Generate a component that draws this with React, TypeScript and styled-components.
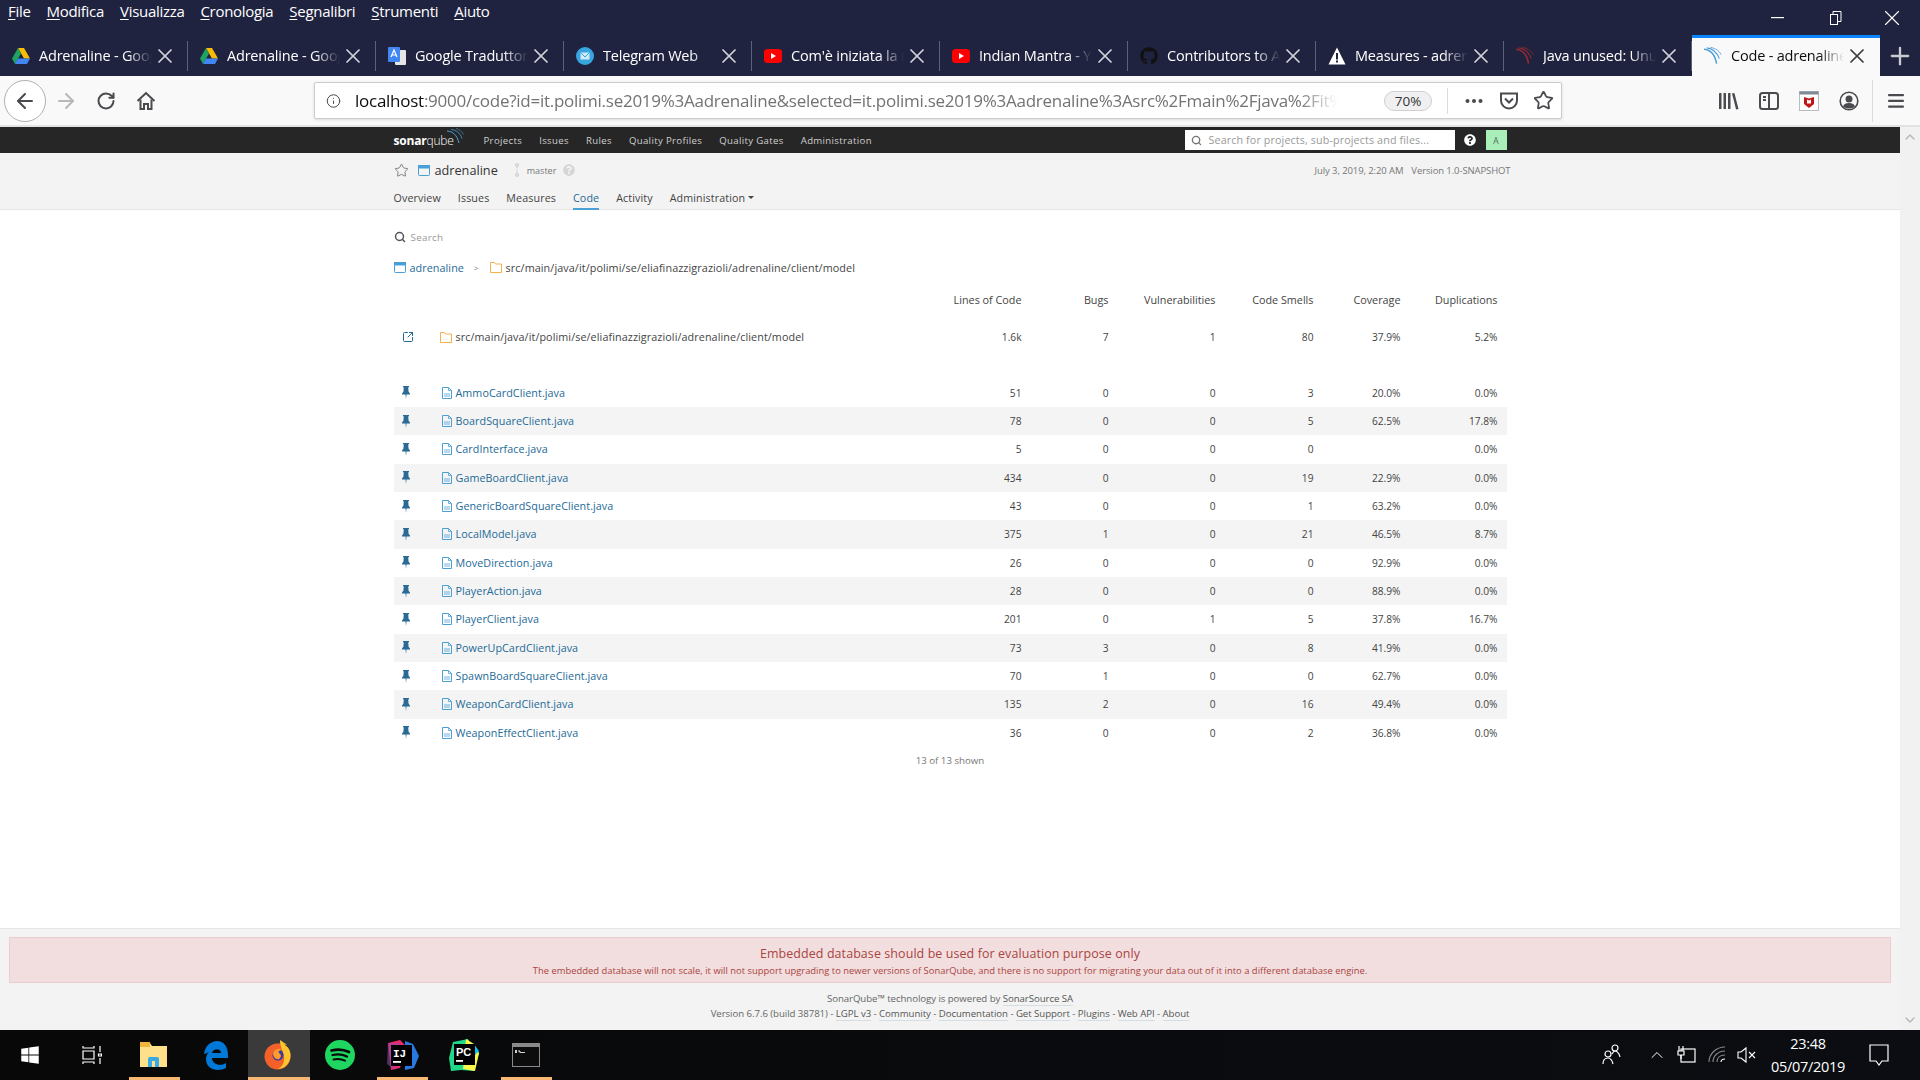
import React from 'react';
import styled, { createGlobalStyle } from 'styled-components';
import { ArrowLeft, ArrowRight, RotateCw, X, Plus, Info, Star, Search, ChevronUp, ChevronDown, SquareArrowOutUpRight } from 'lucide-react';
import { FaGithub, FaQuestionCircle, FaWindows } from 'react-icons/fa';

const UI_FONT = '"Open Sans", "Noto Sans", "Liberation Sans", sans-serif';

const GlobalStyle = createGlobalStyle`
  html, body {
    margin: 0;
    padding: 0;
    background: #20233f;
    overflow: hidden;
  }
  * {
    box-sizing: border-box;
  }
`;

const Screen = styled.div`
  width: 1920px;
  height: 1080px;
  display: flex;
  flex-direction: column;
  font-family: ${UI_FONT};
  overflow: hidden;
`;

/* ---------- browser chrome ---------- */

const TitleBar = styled.div`
  height: 76px;
  background: #20233f;
  display: flex;
  flex-direction: column;
  flex: none;
`;

const MenuRow = styled.div`
  height: 35px;
  display: flex;
  justify-content: space-between;
`;

const MenuList = styled.div`
  display: flex;
  padding: 1px 0 0 8px;
  height: 24px;
  gap: 16px;
`;

const MenuItem = styled.span`
  color: #fff;
  font-size: 15px;
  line-height: 20px;
  letter-spacing: -0.3px;
  u {
    text-underline-offset: 2px;
  }
`;

const WindowControls = styled.div`
  display: flex;
`;

const WindowButton = styled.div`
  width: 56px;
  height: 35px;
  display: flex;
  align-items: center;
  justify-content: center;
  color: #fff;
`;

const MinimizeButton = styled(WindowButton)`
  padding-right: 5px;
`;

const TabRow = styled.div`
  height: 41px;
  display: flex;
`;

const Tab = styled.div<{ $active?: boolean }>`
  width: 188px;
  height: 41px;
  flex: none;
  position: relative;
  display: flex;
  align-items: center;
  padding: ${({ $active }) => ($active ? '0 0 3px 12px' : '0 0 0 12px')};
  background: ${({ $active }) => ($active ? '#f9f9fa' : 'transparent')};
  border-top: ${({ $active }) => ($active ? '3px solid #0a84ff' : 'none')};
  color: ${({ $active }) => ($active ? '#0c0c0d' : '#fff')};

  &::after {
    content: '';
    display: ${({ $active }) => ($active ? 'none' : 'block')};
    position: absolute;
    right: 0;
    top: 6px;
    bottom: 5px;
    width: 1px;
    background: rgba(255, 255, 255, 0.28);
  }
`;

const TabIcon = styled.div`
  width: 18px;
  height: 18px;
  flex: none;
  display: flex;
  align-items: center;
  justify-content: center;
`;

const TabTitle = styled.div`
  width: 113px;
  margin-left: 9px;
  flex: none;
  font-size: 14.5px;
  letter-spacing: -0.2px;
  white-space: nowrap;
  overflow: hidden;
  mask-image: linear-gradient(90deg, #000 78%, transparent 100%);
`;

const TabClose = styled.div`
  width: 24px;
  margin-left: 1px;
  flex: none;
  display: flex;
  justify-content: center;
  opacity: 0.8;
`;

const NewTab = styled.div`
  width: 40px;
  display: flex;
  align-items: center;
  justify-content: center;
  color: #c9c9d2;
`;

const Toolbar = styled.div`
  height: 51px;
  flex: none;
  background: #f9f9fa;
  border-bottom: 2px solid #e3e3e5;
  display: flex;
  align-items: center;
  padding: 0 4px;
  color: #4a4a4f;
`;

const BackButton = styled.div`
  width: 42px;
  height: 42px;
  border-radius: 50%;
  border: 1px solid #b1b1b3;
  background: #fff;
  display: flex;
  align-items: center;
  justify-content: center;
  flex: none;
`;

const ToolSlot = styled.div<{ $w?: number; $dim?: boolean }>`
  width: ${({ $w }) => $w ?? 40}px;
  height: 36px;
  flex: none;
  display: flex;
  align-items: center;
  justify-content: center;
  color: ${({ $dim }) => ($dim ? '#b8b8ba' : '#4a4a4f')};
`;

const UrlBar = styled.div`
  width: 1248px;
  height: 37px;
  margin-left: 148px;
  flex: none;
  background: #fff;
  border: 1px solid #ccc;
  border-radius: 2px;
  box-shadow: 0 1px 3px rgba(0, 0, 0, 0.12);
  display: flex;
  align-items: center;
  padding-left: 11px;
`;

const UrlText = styled.div`
  width: 983px;
  margin-left: 14px;
  flex: none;
  font-size: 17px;
  letter-spacing: -0.26px;
  color: #737373;
  white-space: nowrap;
  overflow: hidden;
  mask-image: linear-gradient(90deg, #000 96%, transparent 100%);

  b {
    font-weight: 400;
    color: #0c0c0d;
  }
`;

const ZoomPill = styled.div`
  width: 48px;
  height: 20px;
  margin-left: 46px;
  flex: none;
  border: 1px solid #d0d0d2;
  border-radius: 10px;
  background: #f0f0f2;
  font-size: 13.5px;
  line-height: 18px;
  text-align: center;
  color: #333;
`;

const UrlSeparator = styled.div`
  width: 1px;
  height: 26px;
  margin: 0 8px 0 15px;
  background: #dcdcde;
  flex: none;
`;

const ToolSpacer = styled.div`
  flex: 1;
`;

const ToolSeparator = styled.div`
  width: 1px;
  height: 42px;
  margin: 0 3px;
  background: #dcdcde;
  flex: none;
`;

/* ---------- page ---------- */

const PageRow = styled.div`
  flex: 1;
  display: flex;
  min-height: 0;
`;

const Page = styled.div`
  width: 1900px;
  flex: none;
  display: flex;
  flex-direction: column;
  background: #fff;
`;

const ScrollTrack = styled.div`
  width: 20px;
  flex: none;
  background: #f1f1f1;
  color: #b5b5b5;
  display: flex;
  flex-direction: column;
  align-items: center;
  justify-content: space-between;
  padding: 2px 0;
`;

const Container = styled.div`
  width: 1113px;
  margin: 0 auto;
`;

const NavBar = styled.div`
  height: 26px;
  background: #262626;
  flex: none;
`;

const NavInner = styled(Container)`
  height: 26px;
  display: flex;
  align-items: center;
`;

const Logo = styled.div`
  width: 90px;
  height: 26px;
  flex: none;
  display: flex;
  align-items: center;
  color: #fff;
  font-size: 12px;
  letter-spacing: -0.2px;

  b {
    font-weight: 700;
  }
  span {
    font-weight: 300;
  }
  svg {
    margin: -9px 0 0 -7px;
  }
`;

const NavLinks = styled.div`
  display: flex;
  gap: 17px;
`;

const NavLink = styled.span`
  color: #d0d0d0;
  font-size: 9.6px;
  letter-spacing: 0.35px;
`;

const NavRight = styled.div`
  margin-left: auto;
  display: flex;
  align-items: center;
`;

const GlobalSearch = styled.div`
  width: 270px;
  height: 20px;
  background: #fff;
  display: flex;
  align-items: center;
  padding-left: 6px;
  gap: 7px;
  color: #777;
  font-size: 10.7px;
  letter-spacing: 0.14px;
  white-space: nowrap;

  span {
    color: #999;
  }
`;

const HelpSlot = styled.div`
  width: 31px;
  display: flex;
  justify-content: center;
  color: #fff;
`;

const Avatar = styled.div`
  width: 21px;
  height: 20px;
  background: #a9efb9;
  color: #4d6b55;
  font-size: 8.5px;
  display: flex;
  align-items: center;
  justify-content: center;
`;

const ComponentHeader = styled.div`
  height: 57px;
  flex: none;
  background: #f3f3f3;
  border-bottom: 1px solid #e6e6e6;
`;

const HeaderTop = styled.div`
  height: 35px;
  display: flex;
  align-items: center;
  padding-bottom: 1px;
`;

const ProjectName = styled.span`
  font-size: 12.7px;
  color: #333;
  margin: 0 16px 0 5px;
`;

const BranchName = styled.span`
  font-size: 9px;
  color: #777;
  margin: 1px 7px 0 7px;
`;

const HeaderMeta = styled.div`
  margin-left: auto;
  margin-right: -4px;
  display: flex;
  gap: 8px;
  font-size: 9.5px;
  letter-spacing: -0.1px;
  color: #777;
`;

const StarSlot = styled.div`
  width: 24px;
  display: flex;
  color: #777;
`;

const HeaderTabs = styled.div`
  height: 22px;
  display: flex;
  gap: 17px;
`;

const HeaderTab = styled.div<{ $active?: boolean }>`
  font-size: 10.7px;
  letter-spacing: 0.12px;
  color: ${({ $active }) => ($active ? '#236a97' : '#444')};
  height: 22px;
  line-height: 20px;
  display: flex;
  align-items: flex-start;
  border-bottom: 2px solid ${({ $active }) => ($active ? '#4b9fd5' : 'transparent')};
`;

const Caret = styled.span`
  width: 0;
  height: 0;
  border-left: 3.5px solid transparent;
  border-right: 3.5px solid transparent;
  border-top: 3.5px solid #444;
  margin: 8px 0 0 3px;
`;

const Main = styled(Container)`
  flex: 1;
  padding-top: 16px;
`;

const SearchRow = styled.div`
  height: 22px;
  display: flex;
  align-items: center;
  gap: 5px;
  color: #555;
  font-size: 9.8px;

  span {
    color: #999;
    letter-spacing: 0.3px;
  }
`;

const Breadcrumbs = styled.div`
  height: 20px;
  margin-top: 9px;
  display: flex;
  align-items: center;
  font-size: 10.8px;
  letter-spacing: 0.06px;
  color: #444;
`;

const CrumbLink = styled.span`
  color: #236a97;
  margin: 0 10px 0 4px;
`;

const CrumbArrow = styled.span`
  color: #777;
  font-size: 8px;
  margin-right: 11px;
`;

const CrumbPath = styled.span`
  margin-left: 4px;
  letter-spacing: 0.09px;
`;

const GRID = '46px 502px 80px 87px 107px 98px 87px 97px';

const HeadRow = styled.div`
  height: 20px;
  margin-top: 12px;
  display: grid;
  grid-template-columns: ${GRID};
  align-items: center;
  padding-right: 9px;
  font-size: 10.8px;
  color: #444;
`;

const BaseRow = styled.div`
  height: 28px;
  margin-top: 14px;
  margin-bottom: 27.67px;
  display: grid;
  grid-template-columns: ${GRID};
  align-items: center;
  padding-right: 9px;
  font-size: 10.2px;
  color: #444;
`;

const FileRow = styled.div<{ $striped: boolean }>`
  height: 28.33px;
  display: grid;
  grid-template-columns: ${GRID};
  align-items: center;
  padding-right: 9px;
  font-size: 10.2px;
  color: #444;
  background: ${({ $striped }) => ($striped ? '#f4f4f4' : 'transparent')};
`;

const PinCell = styled.div`
  padding-left: 8px;
  display: flex;
  color: #2a6a94;
`;

const LinkCell = styled.div`
  padding-left: 8px;
  display: flex;
  color: #236a97;
`;

const NameCell = styled.div<{ $link?: boolean }>`
  display: flex;
  align-items: center;
  gap: 4px;
  font-size: 10.75px;
  letter-spacing: ${({ $link }) => ($link ? 0.06 : 0.1)}px;
  padding-left: ${({ $link }) => ($link ? 2 : 0)}px;
  color: ${({ $link }) => ($link ? '#236a97' : '#444')};
`;

const NumCell = styled.div`
  text-align: right;
`;

const Shown = styled.div`
  height: 16px;
  margin-top: 6px;
  text-align: center;
  font-size: 9.7px;
  line-height: 16px;
  color: #777;
`;

const Footer = styled.div`
  height: 102px;
  flex: none;
  background: #f3f3f3;
  border-top: 1px solid #e6e6e6;
  padding: 8px 9px 0;
  text-align: center;
`;

const Alert = styled.div`
  height: 46px;
  background: #f2dede;
  border: 1px solid #ebccd1;
  color: #a94442;
  padding-top: 7px;
`;

const AlertTitle = styled.div`
  font-size: 12.45px;
  line-height: 18px;
  letter-spacing: 0.1px;
`;

const AlertText = styled.div`
  font-size: 9.4px;
  line-height: 15px;
  letter-spacing: 0.02px;
`;

const FooterLines = styled.div`
  margin-top: 8px;
`;

const FooterLine = styled.div`
  font-size: 9.65px;
  line-height: 15px;
  color: #666;
  letter-spacing: -0.05px;
`;

const FooterLink = styled.span`
  color: #555;
  border-bottom: 1px solid #d4dde3;
`;

/* ---------- taskbar ---------- */

const Taskbar = styled.div`
  height: 50px;
  flex: none;
  background: linear-gradient(90deg, #080808, #0b0d12);
  display: flex;
  color: #fff;
`;

const TaskTile = styled.div<{ $active?: boolean; $open?: boolean; $wide?: boolean }>`
  width: 62px;
  height: 50px;
  flex: none;
  position: relative;
  display: flex;
  align-items: center;
  justify-content: center;
  padding-right: 3px;
  background: ${({ $active }) => ($active ? '#3a3a3a' : 'transparent')};

  &::after {
    content: '';
    display: ${({ $open }) => ($open ? 'block' : 'none')};
    position: absolute;
    left: ${({ $wide }) => ($wide ? 0 : 5)}px;
    right: ${({ $wide }) => ($wide ? 0 : 6)}px;
    bottom: 0;
    height: 3px;
    background: #f6b873;
  }
`;

const Tray = styled.div`
  margin-left: auto;
  margin-right: 10px;
  display: flex;
  align-items: center;
`;

const TraySlot = styled.div<{ $w: number; $gap?: number }>`
  width: ${({ $w }) => $w}px;
  margin-left: ${({ $gap }) => $gap ?? 0}px;
  height: 50px;
  display: flex;
  align-items: center;
  justify-content: center;
`;

const Clock = styled.div`
  width: 80px;
  margin-left: 6px;
  text-align: center;
  font-size: 14.5px;
  line-height: 23px;
  color: #fff;
  letter-spacing: -0.3px;
`;

/* ---------- drawings ---------- */

const DriveIcon = () => (
  <svg width="18" height="16" viewBox="0 0 18 16">
    <path d="M6 0h6l6 10.5h-6z" fill="#fbbc04" />
    <path d="M6 0 0 10.5 3 16l6-10.5z" fill="#1ea362" />
    <path d="M3 16h12l3-5.5H6z" fill="#4285f4" />
  </svg>
);

const TranslateIcon = () => (
  <svg width="18" height="20" viewBox="0 0 18 20">
    <rect x="7" y="4" width="11" height="15" rx="1" fill="#e6e6e6" />
    <rect x="0" y="1" width="12" height="15" rx="1" fill="#4285f4" />
    <path d="M3 11l3-7 3 7M4 9h4" stroke="#fff" strokeWidth="1.2" fill="none" />
  </svg>
);

const TelegramIcon = () => (
  <svg width="18" height="18" viewBox="0 0 18 18">
    <circle cx="9" cy="9" r="9" fill="#37a6e0" />
    <rect x="4.5" y="5.5" width="9" height="7" fill="#cfe9f7" />
    <path d="M4.5 5.5 9 10l4.5-4.5" stroke="#37a6e0" fill="none" />
  </svg>
);

const YoutubeIcon = () => (
  <svg width="18" height="18" viewBox="0 0 18 18">
    <rect x="0" y="2" width="18" height="14" rx="3.5" fill="#f00" />
    <path d="M7 6l5 3-5 3z" fill="#fff" />
  </svg>
);

const WarningIcon = () => (
  <svg width="18" height="18" viewBox="0 0 18 18">
    <path d="M9 0.5 17.5 17.5H.5z" fill="#fff" />
    <rect x="8" y="6" width="2" height="6.5" fill="#20233f" />
    <rect x="8" y="13.5" width="2" height="2" fill="#20233f" />
  </svg>
);

const WaveIcon = ({ color }: { color: string }) => (
  <svg width="20" height="19" viewBox="0 0 20 19" fill="none" stroke={color}>
    <path d="M0 2.500c7 .5 12 5 14 16" strokeWidth="1.700" />
    <path d="M3 1c6 .5 11 4 14 12" strokeWidth="1.200" />
    <path d="M7 .5c5 .8 9.500 3 12 8" strokeWidth=".9" />
  </svg>
);

const HomeIcon = () => (
  <svg width="20" height="20" viewBox="0 0 20 20" fill="none" stroke="#4a4a4f" strokeWidth="2">
    <path d="M1.500 10 10 2l8.500 8" />
    <path d="M4.500 8.500V18h3.500v-5h4v5h3.500V8.500" />
  </svg>
);

const DotsIcon = () => (
  <svg width="18" height="4" viewBox="0 0 18 4" fill="#4a4a4f">
    <circle cx="2.500" cy="2" r="2" />
    <circle cx="9" cy="2" r="2" />
    <circle cx="15.500" cy="2" r="2" />
  </svg>
);

const PocketIcon = () => (
  <svg width="20" height="18" viewBox="0 0 20 18" fill="none" stroke="#4a4a4f" strokeWidth="2">
    <path d="M2 1.500h16v7a8 8 0 0 1-16 0z" />
    <path d="M6 6.500l4 4 4-4" />
  </svg>
);

const LibraryIcon = () => (
  <svg width="20" height="18" viewBox="0 0 20 18" fill="#4a4a4f">
    <rect x="0" y="1" width="2.500" height="16" rx=".5" />
    <rect x="4.500" y="1" width="2.500" height="16" rx=".5" />
    <rect x="9" y="1" width="2.500" height="16" rx=".5" />
    <path d="M13 1.500l2.400-.6L19.500 17l-2.400.5z" />
  </svg>
);

const SidebarIcon = () => (
  <svg width="20" height="18" viewBox="0 0 20 18" fill="none" stroke="#4a4a4f" strokeWidth="2">
    <rect x="1" y="1" width="18" height="16" rx="2.500" />
    <path d="M10 1v16M4 5h3M4 8h3" />
  </svg>
);

const McAfeeIcon = () => (
  <svg width="20" height="20" viewBox="0 0 20 20">
    <rect x=".5" y=".5" width="19" height="19" fill="#fff" stroke="#b8bcc0" />
    <rect x=".5" y=".5" width="19" height="3" fill="#7f8a94" />
    <path d="M5 6l5 1.500L15 6v7l-5 4-5-4z" fill="#c01818" />
    <path d="M8 8.500l2 1 2-1v4h-4z" fill="#fff" />
  </svg>
);

const AccountIcon = () => (
  <svg width="20" height="20" viewBox="0 0 20 20">
    <circle cx="10" cy="10" r="8.800" fill="none" stroke="#4a4a4f" strokeWidth="1.600" />
    <circle cx="10" cy="8" r="3.500" fill="#4a4a4f" />
    <path d="M4 15.500c1-3 3-3.500 6-3.500s5 .5 6 3.500c-3 2.500-9 2.500-12 0z" fill="#4a4a4f" />
  </svg>
);

const HamburgerIcon = () => (
  <svg width="16" height="14" viewBox="0 0 16 14" fill="#4a4a4f">
    <rect width="16" height="2.200" rx="1" />
    <rect y="5.800" width="16" height="2.200" rx="1" />
    <rect y="11.600" width="16" height="2.200" rx="1" />
  </svg>
);

const RestoreIcon = () => (
  <svg width="12" height="14" viewBox="0 0 12 14" fill="none" stroke="#fff">
    <rect x=".5" y="3.500" width="7" height="10" />
    <path d="M3 3.500V.5h8v10H7.500" />
  </svg>
);

const MinimizeIcon = () => (
  <svg width="13" height="2" viewBox="0 0 13 2">
    <rect width="13" height="1.200" fill="#fff" />
  </svg>
);

const ProjectIcon = () => (
  <svg width="12" height="12" viewBox="0 0 12 12" fill="none" stroke="#4b9fd5">
    <rect x=".5" y="1.500" width="11" height="10" rx=".8" />
    <rect x=".5" y="1.500" width="11" height="2.500" fill="#4b9fd5" />
  </svg>
);

const FolderIcon = () => (
  <svg width="12" height="11" viewBox="0 0 12 11" fill="none" stroke="#f6b04e">
    <path d="M.5 10.500V.5h4l1 1.500h6v8.500z" />
  </svg>
);

const FileIcon = () => (
  <svg width="10" height="12" viewBox="0 0 10 12" fill="none" stroke="#4b9fd5">
    <path d="M.5.500h6l3 3v8h-9z" />
    <path d="M6.500.5v3h3M2 7h6M2 9h6" strokeWidth=".8" />
  </svg>
);

const PinIcon = () => (
  <svg width="8" height="13" viewBox="0 0 8 13" fill="currentColor">
    <path d="M1 0h6v1.200H6.200l.4 4.600L8 7.400v1H4.500L4 13l-.5-4.600H0v-1l1.400-1.600.4-4.600H1z" />
  </svg>
);

const BranchIcon = () => (
  <svg width="6" height="14" viewBox="0 0 6 14" fill="none" stroke="#c8c8c8">
    <circle cx="3" cy="2" r="1.400" />
    <circle cx="3" cy="12" r="1.400" />
    <path d="M3 3.500v7" strokeDasharray="1.500 1" />
  </svg>
);

const SonarArcs = () => (
  <svg width="17" height="16" viewBox="0 0 17 16" fill="none" stroke="#4b9fd5">
    <path d="M0 3c6 .5 10 4 12 12" strokeWidth="1" />
    <path d="M4 1.500c5 .5 9 3 11 9" strokeWidth=".8" />
    <path d="M9 .5c3 .5 6 3 7.500 6" strokeWidth=".6" />
  </svg>
);

const ExplorerIcon = () => (
  <svg width="27" height="26" viewBox="0 0 27 26">
    <path d="M0 3V1h10l2 3h15v21H0z" fill="#ffe08a" />
    <rect x="0" y="0" width="10" height="5" fill="#f2b53c" />
    <path d="M8 25v-8a2 2 0 0 1 2-2h7a2 2 0 0 1 2 2v8h-4v-6h-3v6z" fill="#39a9e6" />
  </svg>
);

const EdgeIcon = () => (
  <svg width="25" height="29" viewBox="0 0 25 29">
    <path d="M1 13C2 5 8 0 14 0c7 0 11 6 11 14v3H9c0 6 8 9 14 5v5c-8 4-20 2-20-9 0-3 1-5 3-7-2 1-4 2-5 2zM9 12h9c0-5-8-5-9 0z" fill="#0078d7" />
  </svg>
);

const FirefoxIcon = () => (
  <svg width="28" height="30" viewBox="0 0 28 30">
    <circle cx="13.500" cy="16.500" r="13" fill="#f3602a" />
    <path d="M14 3.500C22 3 27 9 26.500 16 26 24 20 29 14 29c5-3 7-8 6-13C19 10 16 7 16 0c3 2 6 4 7 5z" fill="#ffc52e" />
    <circle cx="14" cy="15" r="5.500" fill="#3a3d9a" />
    <path d="M9 13c2-5 7-5 9-3-3 0-4 2-3 3 2 1 3 4 0 6-3 1-6-2-6-6z" fill="#ff9a2e" />
  </svg>
);

const SpotifyIcon = () => (
  <svg width="30" height="30" viewBox="0 0 30 30">
    <circle cx="15" cy="15" r="15" fill="#1ed760" />
    <g fill="none" stroke="#0a0a0a" strokeLinecap="round">
      <path d="M6.500 10.500c6-1.600 12-1.200 17.500 1.500" strokeWidth="2.800" />
      <path d="M7.500 15c5-1.200 10-.8 14.500 1.500" strokeWidth="2.300" />
      <path d="M8.500 19.500c4-1 8-.6 11.500 1.200" strokeWidth="1.900" />
    </g>
  </svg>
);

const IdeaIcon = () => (
  <svg width="34" height="32" viewBox="0 0 34 32">
    <path d="M3 4 15 1l6 6-6 22-9 2z" fill="#f0286b" />
    <path d="M20 2l8 3 6 12-5 12-9 2z" fill="#2a79e0" />
    <path d="M3 4h12L10 31 2 25z" fill="#8d4ea8" opacity=".55" />
    <rect x="6" y="6" width="21" height="21" fill="#000" />
    <text x="8" y="18" fill="#fff" fontFamily="Liberation Mono, monospace" fontSize="11" fontWeight="700">IJ</text>
    <rect x="8" y="22" width="8" height="1.800" fill="#fff" />
  </svg>
);

const PycharmIcon = () => (
  <svg width="30" height="32" viewBox="0 0 30 32">
    <path d="M4 3l15-3 5 10 6 4-5 18-13-1-10 1-2-13z" fill="#21d789" />
    <path d="M17 0l8 5 5 9-4 18-12-2z" fill="#fcf84a" />
    <path d="M24 4l6 8-4 4z" fill="#07c3f2" />
    <rect x="5" y="5" width="21" height="21" fill="#000" />
    <text x="7" y="17" fill="#fff" fontFamily="Liberation Sans, sans-serif" fontSize="11" fontWeight="700">PC</text>
    <rect x="7" y="21" width="7" height="1.800" fill="#fff" />
  </svg>
);

const ConsoleIcon = () => (
  <svg width="28" height="24" viewBox="0 0 28 24">
    <rect x=".5" y=".5" width="27" height="23" fill="#0c0c0c" stroke="#8a8a8a" />
    <rect x="1" y="1" width="26" height="3" fill="#8a8a8a" />
    <path d="M3 7h2v3H3zM7 7l2 2h4v1H8L6 8z" fill="#cfcfcf" />
  </svg>
);

const TaskViewIcon = () => (
  <svg width="20" height="20" viewBox="0 0 20 20" fill="none" stroke="#fff" strokeWidth="1.200">
    <path d="M1 1v2h11V1M1 19v-2h11v2M1 6h11v8H1zM18 1v6M18 13v6M16.500 9h3v2h-3z" />
  </svg>
);

const PeopleIcon = () => (
  <svg width="20" height="22" viewBox="0 0 20 22" fill="none" stroke="#fff" strokeWidth="1.200">
    <circle cx="13" cy="4" r="3" />
    <circle cx="6" cy="10" r="3" />
    <path d="M1 20c0-4 2-6 5-6s4 2 5 6M10 10c1-2 2-3 3-3s4 1 5 6" />
  </svg>
);

const BatteryIcon = () => (
  <svg width="20" height="20" viewBox="0 0 20 20" fill="none" stroke="#fff" strokeWidth="1.200">
    <rect x="4" y="4" width="14" height="13" />
    <path d="M2 1v5M6 1v5M1 6h6v4H1zM4 10v4" fill="#0a0a0a" />
  </svg>
);

const WifiIcon = () => (
  <svg width="18" height="18" viewBox="0 0 18 18" fill="none" stroke="#888" strokeWidth="1.100">
    <path d="M1 16C1 8 8 1 17 1M5 16c0-6 5-11 12-11M9 16c0-4 3-7 8-7" />
    <path d="M13 16c0-2 1-3 4-3" stroke="#fff" />
  </svg>
);

const VolumeIcon = () => (
  <svg width="20" height="18" viewBox="0 0 20 18" fill="none" stroke="#fff" strokeWidth="1.100">
    <path d="M1 6h3l5-4v14l-5-4H1z" />
    <path d="M12 6l6 6M18 6l-6 6" />
  </svg>
);

const NotificationIcon = () => (
  <svg width="20" height="22" viewBox="0 0 20 22" fill="none" stroke="#fff" strokeWidth="1.200">
    <path d="M1 1h18v16h-6l-3 4-3-4H1z" />
  </svg>
);

/* ---------- data ---------- */

interface BrowserTab {
  title: string;
  icon: React.ReactNode;
  active?: boolean;
}

const MENU: [string, string][] = [
  ['F', 'ile'],
  ['M', 'odifica'],
  ['V', 'isualizza'],
  ['C', 'ronologia'],
  ['S', 'egnalibri'],
  ['S', 'trumenti'],
  ['A', 'iuto'],
];

const TABS: BrowserTab[] = [
  { title: 'Adrenaline - Google Drive', icon: <DriveIcon /> },
  { title: 'Adrenaline - Google Drive', icon: <DriveIcon /> },
  { title: 'Google Traduttore', icon: <TranslateIcon /> },
  { title: 'Telegram Web', icon: <TelegramIcon /> },
  { title: "Com'è iniziata la mia", icon: <YoutubeIcon /> },
  { title: 'Indian Mantra - YouTube', icon: <YoutubeIcon /> },
  { title: 'Contributors to Adrenaline', icon: <FaGithub size={18} color="#111" /> },
  { title: 'Measures - adrenaline', icon: <WarningIcon /> },
  { title: 'Java unused: Unused', icon: <WaveIcon color="#8e2a35" /> },
  { title: 'Code - adrenaline', icon: <WaveIcon color="#4b9fd5" />, active: true },
];

const NAV = ['Projects', 'Issues', 'Rules', 'Quality Profiles', 'Quality Gates', 'Administration'];

const HEADER_TABS = ['Overview', 'Issues', 'Measures', 'Code', 'Activity'];

const COLUMNS = ['Lines of Code', 'Bugs', 'Vulnerabilities', 'Code Smells', 'Coverage', 'Duplications'];

const FILES: [string, string, string, string, string, string, string][] = [
  ['AmmoCardClient.java', '51', '0', '0', '3', '20.0%', '0.0%'],
  ['BoardSquareClient.java', '78', '0', '0', '5', '62.5%', '17.8%'],
  ['CardInterface.java', '5', '0', '0', '0', '', '0.0%'],
  ['GameBoardClient.java', '434', '0', '0', '19', '22.9%', '0.0%'],
  ['GenericBoardSquareClient.java', '43', '0', '0', '1', '63.2%', '0.0%'],
  ['LocalModel.java', '375', '1', '0', '21', '46.5%', '8.7%'],
  ['MoveDirection.java', '26', '0', '0', '0', '92.9%', '0.0%'],
  ['PlayerAction.java', '28', '0', '0', '0', '88.9%', '0.0%'],
  ['PlayerClient.java', '201', '0', '1', '5', '37.8%', '16.7%'],
  ['PowerUpCardClient.java', '73', '3', '0', '8', '41.9%', '0.0%'],
  ['SpawnBoardSquareClient.java', '70', '1', '0', '0', '62.7%', '0.0%'],
  ['WeaponCardClient.java', '135', '2', '0', '16', '49.4%', '0.0%'],
  ['WeaponEffectClient.java', '36', '0', '0', '2', '36.8%', '0.0%'],
];

const MODEL_PATH = 'src/main/java/it/polimi/se/eliafinazzigrazioli/adrenaline/client/model';

const FOOTER_LINKS = ['LGPL v3', 'Community', 'Documentation', 'Get Support', 'Plugins', 'Web API', 'About'];

export default function App() {
  return (
    <Screen>
      <GlobalStyle />

      <TitleBar>
        <MenuRow>
          <MenuList>
            {MENU.map(([first, rest]) => (
              <MenuItem key={first + rest}>
                <u>{first}</u>
                {rest}
              </MenuItem>
            ))}
          </MenuList>
          <WindowControls>
            <MinimizeButton><MinimizeIcon /></MinimizeButton>
            <WindowButton><RestoreIcon /></WindowButton>
            <WindowButton><X size={26} strokeWidth={1} /></WindowButton>
          </WindowControls>
        </MenuRow>
        <TabRow>
          {TABS.map((tab, i) => (
            <Tab key={i} $active={tab.active}>
              <TabIcon>{tab.icon}</TabIcon>
              <TabTitle>{tab.title}</TabTitle>
              <TabClose><X size={24} strokeWidth={1.7} /></TabClose>
            </Tab>
          ))}
          <NewTab><Plus size={28} strokeWidth={2} /></NewTab>
        </TabRow>
      </TitleBar>

      <Toolbar>
        <BackButton><ArrowLeft size={24} strokeWidth={2} /></BackButton>
        <ToolSlot $dim><ArrowRight size={24} strokeWidth={2} /></ToolSlot>
        <ToolSlot><RotateCw size={20} strokeWidth={2.4} /></ToolSlot>
        <ToolSlot><HomeIcon /></ToolSlot>
        <UrlBar>
          <Info size={16} strokeWidth={1.6} />
          <UrlText>
            <b>localhost</b>:9000/code?id=it.polimi.se2019%3Aadrenaline&selected=it.polimi.se2019%3Aadrenaline%3Asrc%2Fmain%2Fjava%2Fit%2F
          </UrlText>
          <ZoomPill>70%</ZoomPill>
          <UrlSeparator />
          <ToolSlot $w={35}><DotsIcon /></ToolSlot>
          <ToolSlot $w={35}><PocketIcon /></ToolSlot>
          <ToolSlot $w={35}><Star size={21} strokeWidth={2} /></ToolSlot>
        </UrlBar>
        <ToolSpacer />
        <ToolSlot><LibraryIcon /></ToolSlot>
        <ToolSlot><SidebarIcon /></ToolSlot>
        <ToolSlot><McAfeeIcon /></ToolSlot>
        <ToolSlot><AccountIcon /></ToolSlot>
        <ToolSeparator />
        <ToolSlot><HamburgerIcon /></ToolSlot>
      </Toolbar>

      <PageRow>
        <Page>
          <NavBar>
            <NavInner>
              <Logo>
                <b>sonar</b><span>qube</span>
                <SonarArcs />
              </Logo>
              <NavLinks>
                {NAV.map((item) => (
                  <NavLink key={item}>{item}</NavLink>
                ))}
              </NavLinks>
              <NavRight>
                <GlobalSearch>
                  <Search size={11} strokeWidth={3} />
                  <span>Search for projects, sub-projects and files...</span>
                </GlobalSearch>
                <HelpSlot><FaQuestionCircle size={12} /></HelpSlot>
                <Avatar>A</Avatar>
              </NavRight>
            </NavInner>
          </NavBar>

          <ComponentHeader>
            <Container>
              <HeaderTop>
                <StarSlot><Star size={15} strokeWidth={1.5} /></StarSlot>
                <ProjectIcon />
                <ProjectName>adrenaline</ProjectName>
                <BranchIcon />
                <BranchName>master</BranchName>
                <FaQuestionCircle size={12} color="#d5d5d5" />
                <HeaderMeta>
                  <span>July 3, 2019, 2:20 AM</span>
                  <span>Version 1.0-SNAPSHOT</span>
                </HeaderMeta>
              </HeaderTop>
              <HeaderTabs>
                {HEADER_TABS.map((tab) => (
                  <HeaderTab key={tab} $active={tab === 'Code'}>{tab}</HeaderTab>
                ))}
                <HeaderTab>Administration<Caret /></HeaderTab>
              </HeaderTabs>
            </Container>
          </ComponentHeader>

          <Main>
            <SearchRow>
              <Search size={12} strokeWidth={3} />
              <span>Search</span>
            </SearchRow>
            <Breadcrumbs>
              <ProjectIcon />
              <CrumbLink>adrenaline</CrumbLink>
              <CrumbArrow>&gt;</CrumbArrow>
              <FolderIcon />
              <CrumbPath>{MODEL_PATH}</CrumbPath>
            </Breadcrumbs>

            <HeadRow>
              <div />
              <div />
              {COLUMNS.map((col) => (
                <NumCell key={col}>{col}</NumCell>
              ))}
            </HeadRow>

            <BaseRow>
              <LinkCell><SquareArrowOutUpRight size={12} strokeWidth={2} /></LinkCell>
              <NameCell><FolderIcon />{MODEL_PATH}</NameCell>
              <NumCell>1.6k</NumCell>
              <NumCell>7</NumCell>
              <NumCell>1</NumCell>
              <NumCell>80</NumCell>
              <NumCell>37.9%</NumCell>
              <NumCell>5.2%</NumCell>
            </BaseRow>

            {FILES.map(([name, ...values], i) => (
              <FileRow key={name} $striped={i % 2 === 1}>
                <PinCell><PinIcon /></PinCell>
                <NameCell $link><FileIcon />{name}</NameCell>
                {values.map((value, j) => (
                  <NumCell key={j}>{value}</NumCell>
                ))}
              </FileRow>
            ))}

            <Shown>13 of 13 shown</Shown>
          </Main>

          <Footer>
            <Alert>
              <AlertTitle>Embedded database should be used for evaluation purpose only</AlertTitle>
              <AlertText>
                The embedded database will not scale, it will not support upgrading to newer versions of SonarQube, and there is no support for migrating your data out of it into a different database engine.
              </AlertText>
            </Alert>
            <FooterLines>
              <FooterLine>
                SonarQube™ technology is powered by <FooterLink>SonarSource SA</FooterLink>
              </FooterLine>
              <FooterLine>
                Version 6.7.6 (build 38781)
                {FOOTER_LINKS.map((link) => (
                  <React.Fragment key={link}> - <FooterLink>{link}</FooterLink></React.Fragment>
                ))}
              </FooterLine>
            </FooterLines>
          </Footer>
        </Page>
        <ScrollTrack>
          <ChevronUp size={16} strokeWidth={2} />
          <ChevronDown size={16} strokeWidth={2} />
        </ScrollTrack>
      </PageRow>

      <Taskbar>
        <TaskTile><FaWindows size={20} /></TaskTile>
        <TaskTile><TaskViewIcon /></TaskTile>
        <TaskTile $open><ExplorerIcon /></TaskTile>
        <TaskTile><EdgeIcon /></TaskTile>
        <TaskTile $active $open $wide><FirefoxIcon /></TaskTile>
        <TaskTile><SpotifyIcon /></TaskTile>
        <TaskTile $open><IdeaIcon /></TaskTile>
        <TaskTile><PycharmIcon /></TaskTile>
        <TaskTile $open><ConsoleIcon /></TaskTile>
        <Tray>
          <TraySlot $w={40}><PeopleIcon /></TraySlot>
          <TraySlot $w={30} $gap={10}><ChevronUp size={20} strokeWidth={1.2} /></TraySlot>
          <TraySlot $w={30}><BatteryIcon /></TraySlot>
          <TraySlot $w={30}><WifiIcon /></TraySlot>
          <TraySlot $w={30}><VolumeIcon /></TraySlot>
          <Clock>23:48<br />05/07/2019</Clock>
          <TraySlot $w={62}><NotificationIcon /></TraySlot>
        </Tray>
      </Taskbar>
    </Screen>
  );
}
